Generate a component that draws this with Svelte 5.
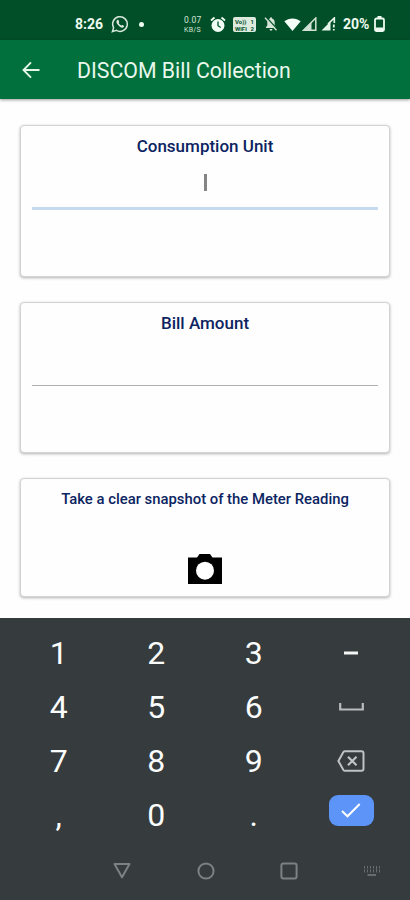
<script lang="ts">
  let consumption: string = "";
  let amount: string = "";

  const keys: string[] = [
    "1", "2", "3", "minus",
    "4", "5", "6", "space",
    "7", "8", "9", "delete",
    ",", "0", ".", "done",
  ];
</script>

<div class="screen">
  <div class="status-bar">
    <span class="time">8:26</span>
    <svg class="whatsapp" width="18" height="18" viewBox="0 0 18 18" fill="none">
      <path d="M1.4 16.6l1.2-4A7.3 7.3 0 1 1 5.4 15.400z" stroke="#d9e8dd" stroke-width="1.5" />
      <path d="M6.200 5c-1.300 1-1 3 .8 5s4 3.300 5.500 2.300c1-.8.8-1.400-.2-1.900-1.100-.6-1.300-.5-2 .2-1.200-.5-2-1.300-2.600-2.500.7-.7.7-1 .2-2-.4-1.100-.9-1.600-1.700-1.100z" fill="#d9e8dd" />
    </svg>
    <span class="dot"></span>
    <div class="speed">
      <span class="rate">0.07</span>
      <span class="unit">KB/S</span>
    </div>
    <svg class="alarm" width="16" height="17" viewBox="0 0 16 17">
      <circle cx="8" cy="9.500" r="6.500" fill="#f2fff5" />
      <path d="M1 4.500L4.500 1.500M15 4.500L11.500 1.500" stroke="#f2fff5" stroke-width="1.800" />
      <path d="M8 5.500V9.700L10.700 11.500" fill="none" stroke="#014f28" stroke-width="1.300" />
    </svg>
    <svg class="vowifi" width="23" height="15" viewBox="0 0 23 15">
      <rect width="23" height="15" rx="2" fill="#dcebdd" />
      <text x="2" y="7">Vo))</text>
      <text x="2" y="13.500">WiFi</text>
      <text x="17.500" y="7">1</text>
      <text x="17.500" y="13.500">2</text>
    </svg>
    <svg class="bell" width="14" height="16" viewBox="0 0 14 16">
      <path d="M2 12V11L3.300 9.600V6.500C3.300 4.400 4.300 3 6 2.500V1.500H8V2.500C9.800 3 10.700 4.500 10.700 6.500V9.600L12 11V12ZM5.500 13H8.500Q8.300 14.700 7 14.700T5.500 13Z" fill="#d5e5d8" />
      <path d="M2.300 1.300L13.300 13.300" stroke="#014f28" stroke-width="1.300" />
      <path d="M1 1.800L12.500 14.300" stroke="#d5e5d8" stroke-width="1.300" />
    </svg>
    <svg class="wifi" width="17" height="13" viewBox="0 0 17 13">
      <path d="M.3 3.300C4.800-.6 12.200-.6 16.700 3.300L8.500 13Z" fill="#f5fff7" />
    </svg>
    <svg class="signal" width="15" height="14" viewBox="0 0 15 14">
      <path d="M1.500 13.200L13.800 1V13.200Z" fill="none" stroke="#cfe2d4" stroke-width="1.500" />
      <path d="M1 13.500L9.500 5V13.500Z" fill="#cfe2d4" />
    </svg>
    <svg class="signal second" width="15" height="14" viewBox="0 0 15 14">
      <path d="M.5 13.500L9.500 4.500V13.500Z" fill="#e6f5e9" />
      <path d="M7 7L13.300 1V6" fill="none" stroke="#e6f5e9" stroke-width="1.700" />
      <path d="M12.800 7.500V10.500M12.800 12V13.600" stroke="#e6f5e9" stroke-width="1.800" />
    </svg>
    <span class="percent">20%</span>
    <svg class="battery" width="11" height="16" viewBox="0 0 11 16">
      <rect x="3.500" width="4" height="3" fill="#eefbf0" />
      <rect x="1" y="2.500" width="9" height="12.500" rx="1.500" fill="none" stroke="#eefbf0" stroke-width="1.800" />
      <rect x="1.500" y="11.500" width="8" height="3" fill="#eefbf0" />
    </svg>
  </div>

  <header class="app-bar">
    <svg class="back" width="18" height="18" viewBox="0 0 18 18" fill="none" stroke="#e6f7ea" stroke-width="1.900">
      <path d="M17.500 9H1.600M9 1.300L1.500 9L9 16.700" />
    </svg>
    <h1>DISCOM Bill Collection</h1>
  </header>

  <main>
    <section class="card">
      <label for="consumption">Consumption Unit</label>
      <div class="field focused">
        <span class="caret"></span>
        <input id="consumption" type="text" bind:value={consumption} />
      </div>
    </section>

    <section class="card">
      <label for="amount">Bill Amount</label>
      <div class="field">
        <input id="amount" type="text" bind:value={amount} />
      </div>
    </section>

    <section class="card snapshot">
      <p>Take a clear snapshot of the Meter Reading</p>
      <svg width="34" height="30" viewBox="0 0 34 30">
        <path d="M0 3.500H9L11.500 0H22L24.500 3.500H34V30H0Z" fill="#000" />
        <circle cx="17" cy="16.700" r="9" fill="#fff" />
      </svg>
    </section>
  </main>

  <div class="keyboard">
    <div class="keys">
      {#each keys as key}
        <button class="key" class:punct={key === "," || key === "."} aria-label={key}>
          {#if key === "minus"}
            <svg width="14" height="4" viewBox="0 0 14 4">
              <path d="M0 2H14" stroke="#f4f5f5" stroke-width="3" />
            </svg>
          {:else if key === "space"}
            <svg width="25" height="8" viewBox="0 0 25 8">
              <path d="M1.200 0V6.500H23.800V0" fill="none" stroke="#b9bcbe" stroke-width="2.200" />
            </svg>
          {:else if key === "delete"}
            <svg width="28" height="22" viewBox="0 0 28 22" fill="none" stroke="#bfc3c4" stroke-width="2">
              <path d="M8 1.200H24.500Q26.500 1.200 26.500 3.200V18.800Q26.500 20.800 24.500 20.800H8Q7 20.800 6.400 20L1.400 11L6.400 2Q7 1.200 8 1.200Z" />
              <path d="M11 6.700L19.500 15.300M19.500 6.700L11 15.300" stroke-width="2.200" />
            </svg>
          {:else if key === "done"}
            <span class="done">
              <svg width="20" height="15" viewBox="0 0 20 15">
                <path d="M1 8L6.500 13.300L18.700 1" fill="none" stroke="#fff" stroke-width="2" />
              </svg>
            </span>
          {:else}
            {key}
          {/if}
        </button>
      {/each}
    </div>

    <nav>
      <svg width="18" height="18" viewBox="0 0 18 18">
        <path d="M1.500 2H16.500L9 15.300Z" stroke-linejoin="round" />
      </svg>
      <svg width="18" height="18" viewBox="0 0 18 18">
        <circle cx="9" cy="9" r="7.600" />
      </svg>
      <svg width="18" height="18" viewBox="0 0 18 18">
        <rect x="1.400" y="1.400" width="15.200" height="15.200" rx="2" />
      </svg>
      <svg class="switcher" width="18" height="12" viewBox="0 0 18 12">
        <path d="M1.500 1V3.500M1.500 4.500V7.500M4.500 1V3.500M4.500 4.500V7.500M7.500 1V3.500M7.500 4.500V7.500M10.500 1V3.500M10.500 4.500V7.500M13.500 1V7.500M16.500 1V3.500M16.500 4.500V7.500" />
        <path d="M4.500 10H13" stroke-width="2" />
      </svg>
    </nav>
  </div>
</div>

<style>
  :global(body) {
    margin: 0;
    background: #fefefe;
  }

  .screen {
    display: flex;
    flex-direction: column;
    width: 410px;
    height: 900px;
    overflow: hidden;
    background: #fefefe;
    font-family: Roboto, sans-serif;
  }

  svg {
    display: block;
    flex: none;
  }

  .status-bar {
    display: flex;
    align-items: center;
    box-sizing: border-box;
    height: 40px;
    padding: 8px 0 0 75px;
    background: #014f28;
    color: #eefbf0;
    font-size: 14px;
    font-weight: 700;
  }

  .time {
    width: 36px;
    font-size: 14px;
  }

  .dot {
    width: 5px;
    height: 5px;
    margin: 0 40px 0 10px;
    border-radius: 50%;
    background: #eefbf0;
  }

  .speed {
    display: flex;
    flex-direction: column;
    gap: 1px;
    width: 26px;
    color: #d5e5d8;
    font-weight: 400;
  }

  .rate {
    font-size: 8.5px;
    line-height: 10px;
    letter-spacing: 0.2px;
  }

  .unit {
    font-size: 7px;
    line-height: 8px;
    letter-spacing: 0.3px;
  }

  .vowifi {
    margin: 0 8px 0 7px;
  }

  .vowifi text {
    fill: #014f28;
    font-size: 6px;
    font-weight: 700;
  }

  .wifi {
    margin: 0 1px 0 6px;
  }

  .second {
    margin: 0 7px 0 4px;
  }

  .percent {
    width: 31px;
  }

  .app-bar {
    display: flex;
    align-items: center;
    gap: 37px;
    box-sizing: border-box;
    height: 59px;
    padding: 2px 22px 0;
    background: #02703d;
    box-shadow: 0 1px 3px rgba(0, 0, 0, 0.4);
  }

  .back {
    margin-bottom: 2px;
  }

  h1 {
    margin: 0;
    color: #e9f8ec;
    font-size: 21.3px;
    font-weight: 400;
    line-height: 26px;
    white-space: nowrap;
  }

  main {
    display: flex;
    flex-direction: column;
    gap: 25px;
    flex: 1;
    padding: 26px 20px 0;
  }

  .card {
    display: flex;
    flex-direction: column;
    align-items: center;
    box-sizing: border-box;
    height: 151.5px;
    padding: 10px 11px 0;
    border: 1px solid #d3d3d3;
    border-radius: 4px;
    background: #fefefe;
    box-shadow: 0 1px 3px rgba(0, 0, 0, 0.3);
  }

  label {
    color: #0c2461;
    font-size: 17px;
    font-weight: 500;
    line-height: 21px;
  }

  .field {
    display: flex;
    align-items: center;
    justify-content: center;
    box-sizing: border-box;
    width: 100%;
    height: 52px;
    border-bottom: 1px solid #b0b0b0;
  }

  .focused {
    height: 53px;
    border-bottom: 3px solid #c6dbed;
  }

  .caret {
    width: 3px;
    height: 17px;
    background: #858585;
  }

  input {
    width: 0;
    padding: 0;
    border: none;
    outline: none;
    background: none;
    font-size: 17px;
  }

  .snapshot {
    height: 119px;
  }

  .snapshot p {
    margin: 0 0 45px;
    color: #0c2461;
    font-size: 14.85px;
    font-weight: 500;
    line-height: 20px;
    white-space: nowrap;
  }

  .keyboard {
    box-sizing: border-box;
    height: 282px;
    padding: 8px 10px 0;
    background: #363b3e;
  }

  .keys {
    display: grid;
    grid-template-columns: repeat(4, 1fr);
    grid-auto-rows: 54px;
  }

  .key {
    display: flex;
    align-items: center;
    justify-content: center;
    padding: 0;
    border: none;
    background: none;
    color: #fbfcfc;
    font-family: inherit;
    font-size: 32px;
    line-height: 38px;
  }

  .punct {
    font-size: 32px;
  }

  .done {
    display: flex;
    align-items: center;
    justify-content: center;
    width: 45px;
    height: 31px;
    margin-bottom: 9px;
    border-radius: 9px;
    background: #5c94f7;
  }

  nav {
    display: flex;
    align-items: center;
    gap: 65.5px;
    height: 57px;
    padding-left: 103px;
    fill: none;
    stroke: #7c8184;
    stroke-width: 2;
  }

  .switcher {
    margin-left: -1px;
    stroke-width: 1;
    opacity: 0.7;
  }
</style>
